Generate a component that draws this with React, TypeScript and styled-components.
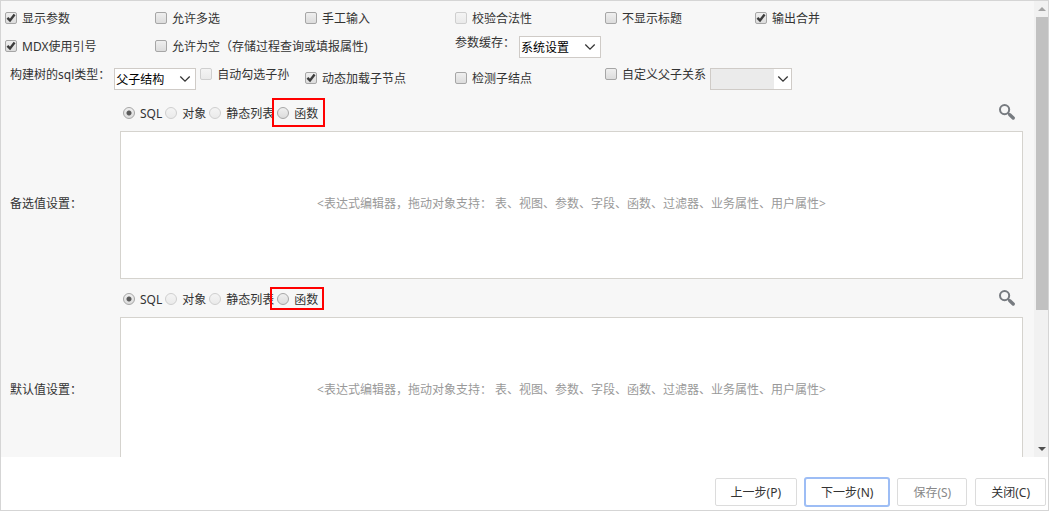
import React, { useId } from "react";
import styled, { createGlobalStyle, css } from "styled-components";

const GlobalStyle = createGlobalStyle`
  *, *::before, *::after { box-sizing: border-box; }
  body {
    margin: 0;
    background: #fff;
  }
  body, input, select, textarea, button {
    font-family: "Noto Sans", "Noto Sans CJK SC", sans-serif;
    font-size: 12px;
    line-height: 14px;
    color: #333;
  }
`;

const Dialog = styled.main`
  display: flex;
  flex-direction: column;
  height: 100vh;
  border: 1px solid #d5d5d5;
`;

const Panel = styled.div`
  flex: 1;
  min-height: 0;
  display: flex;
  background: #f7f7f7;
`;

const Content = styled.form`
  flex: 1;
  min-width: 0;
  overflow-y: auto;
  scrollbar-width: none;
  padding-top: 4px;
`;

const Options = styled.div`
  display: grid;
  grid-template-columns: repeat(6, 150px);
  grid-template-rows: 28px 28px 36px;
  align-items: center;
  padding-left: 4px;
`;

const Cell = styled.div<{ $span?: number; $inset?: boolean }>`
  grid-column: span ${(p) => p.$span ?? 1};
  display: flex;
  align-items: flex-start;
  gap: 4px;
  padding-left: ${(p) => (p.$inset ? 5 : 0)}px;
  white-space: nowrap;
`;

const CheckLabel = styled.label`
  display: inline-flex;
  align-items: center;
  gap: 5px;
  white-space: nowrap;
`;

const CheckBox = styled.span`
  display: grid;
  width: 12px;
  height: 12px;
  margin-bottom: 2px;

  > * {
    grid-area: 1 / 1;
  }

  svg {
    pointer-events: none;
    display: none;
  }

  input:checked + svg {
    display: block;
  }
`;

const controlFace = css`
  appearance: none;
  width: 12px;
  height: 12px;
  margin: 0;
  border: 1px solid #a6a6a6;
  background: linear-gradient(#efefef, #dcdcdc);

  &:disabled {
    border-color: #cfcfcf;
    background: linear-gradient(#f4f4f4, #eaeaea);
  }
`;

const CheckInput = styled.input`
  ${controlFace}
  border-radius: 2px;
`;

const RadioInput = styled.input`
  ${controlFace}
  margin-bottom: 2px;
  border-radius: 50%;

  &:checked {
    background: radial-gradient(circle, #5a5a5a 0 2px, #5a5a5a00 3px),
      linear-gradient(#efefef, #dcdcdc);
  }
`;

const SelectBox = styled.span`
  display: grid;
  width: 82px;
  height: 22px;

  > * {
    grid-area: 1 / 1;
  }
`;

const SelectInput = styled.select`
  appearance: none;
  min-width: 0;
  margin: 0;
  padding: 1px 18px 0 1px;
  border: 1px solid #cfcbc7;
  border-radius: 0;
  background: #fff;
  color: #000;

  &:disabled {
    background: #ebebeb;
    opacity: 1;
  }
`;

const SelectArrow = styled.span<{ $boxed?: boolean }>`
  justify-self: end;
  display: flex;
  align-items: center;
  justify-content: center;
  width: ${(p) => (p.$boxed ? 17 : 20)}px;
  margin: 1px;
  background: #fff;
  pointer-events: none;
`;

const Section = styled.section`
  display: grid;
  grid-template-columns: 119px 1fr;
  grid-template-rows: 34px 148px;
  padding-right: 11px;
  margin-bottom: 4px;
`;

const SectionLabel = styled.label`
  grid-area: 2 / 1;
  align-self: center;
  padding: 0 0 2px 9px;
`;

const SectionTools = styled.div`
  grid-area: 1 / 2;
  display: flex;
  align-items: center;
  gap: 3px;
  padding: 0 8px 0 3px;
`;

const RadioLabel = styled.label`
  position: relative;
  display: inline-flex;
  align-items: center;
  gap: 5px;
  white-space: nowrap;
`;

const Highlight = styled.span<{ $tall?: boolean }>`
  position: absolute;
  border: 2px solid #f00;
  pointer-events: none;
  ${(p) =>
    p.$tall
      ? css`
          inset: -9px -7px -6px -5px;
        `
      : css`
          inset: -6px -6px -3px -7px;
        `}
`;

const SearchButton = styled.button`
  display: flex;
  margin: 0 0 4px auto;
  padding: 0;
  border: 0;
  background: none;
`;

const Editor = styled.textarea`
  grid-area: 2 / 2;
  width: 100%;
  margin: 0;
  padding: 65px 8px 0;
  border: 1px solid #d5d3ce;
  border-radius: 0;
  background: #fff;
  text-align: center;
  resize: none;

  &::placeholder {
    color: #999;
    opacity: 1;
  }
`;

const ScrollTrack = styled.div`
  display: flex;
  flex-direction: column;
  width: 14px;
  padding-left: 2px;
  background: #f1f1f1;
`;

const ScrollArrow = styled.span`
  display: flex;
  align-items: center;
  justify-content: center;
  height: 16px;
`;

const ScrollLane = styled.div`
  flex: 1;
`;

const ScrollThumb = styled.div`
  height: 69%;
  background: #c1c1c1;
`;

const Footer = styled.footer`
  display: flex;
  justify-content: flex-end;
  gap: 8px;
  padding: 21px 2px 4px;
  background: #fff;
`;

const FooterButton = styled.button<{ $primary?: boolean }>`
  height: 28px;
  padding: 2px 15px 0;
  border: 1px solid ${(p) => (p.$primary ? "#9dbdf5" : "#dcdcdc")};
  border-radius: 2px;
  box-shadow: ${(p) => (p.$primary ? "0 0 0 1px #9dbdf5" : "none")};
  background: #fff;

  &:disabled {
    color: #888;
  }
`;

interface CheckProps {
  text: string;
  checked?: boolean;
  disabled?: boolean;
}

function Check({ text, checked, disabled }: CheckProps) {
  return (
    <CheckLabel>
      <CheckBox>
        <CheckInput type="checkbox" defaultChecked={checked} disabled={disabled} />
        <svg width="12" height="12" viewBox="0 0 12 12" fill="none" stroke="#3c3c3c" strokeWidth="2.4">
          <path d="M2.4 5.8 L5 8.4 L9.6 2.6" />
        </svg>
      </CheckBox>
      {text}
    </CheckLabel>
  );
}

interface SelectProps {
  id?: string;
  value?: string;
  name?: string;
  disabled?: boolean;
}

function Select({ id, value = "", name, disabled }: SelectProps) {
  return (
    <SelectBox>
      <SelectInput id={id} aria-label={name} disabled={disabled}>
        <option>{value}</option>
      </SelectInput>
      <SelectArrow $boxed={disabled}>
        <svg width="12" height="8" viewBox="0 0 12 8" fill="none" stroke="#333" strokeWidth="1.3">
          <path d="M1.3 1.5 L6 6.1 L10.7 1.5" />
        </svg>
      </SelectArrow>
    </SelectBox>
  );
}

const sources = [
  { text: "SQL", checked: true },
  { text: "对象", disabled: true },
  { text: "静态列表", disabled: true },
  { text: "函数", marked: true },
];

function ValueSection({ title, tall }: { title: string; tall?: boolean }) {
  const id = useId();
  return (
    <Section>
      <SectionTools>
        {sources.map((s) => (
          <RadioLabel key={s.text}>
            <RadioInput type="radio" name={id + "source"} defaultChecked={s.checked} disabled={s.disabled} />
            {s.text}
            {s.marked && <Highlight $tall={tall} />}
          </RadioLabel>
        ))}
        <SearchButton type="button" aria-label="搜索">
          <svg width="16" height="16" viewBox="0 0 16 16" fill="none" stroke="#777b80">
            <circle cx="5.6" cy="5.6" r="4.6" strokeWidth="2" />
            <path d="M8.8 8.8 L10.6 10.6" strokeWidth="2" />
            <path d="M10.8 10.8 L14.2 14" strokeWidth="3.4" strokeLinecap="round" />
          </svg>
        </SearchButton>
      </SectionTools>
      <SectionLabel htmlFor={id}>{title}</SectionLabel>
      <Editor
        id={id}
        placeholder="<表达式编辑器，拖动对象支持： 表、视图、参数、字段、函数、过滤器、业务属性、用户属性>"
      />
    </Section>
  );
}

export default function App() {
  return (
    <>
      <GlobalStyle />
      <Dialog>
        <Panel>
          <Content>
            <Options>
              <Check text="显示参数" checked />
              <Check text="允许多选" />
              <Check text="手工输入" />
              <Check text="校验合法性" disabled />
              <Check text="不显示标题" />
              <Check text="输出合并" checked />

              <Check text="MDX使用引号" checked />
              <Cell $span={2}>
                <Check text="允许为空（存储过程查询或填报属性)" />
              </Cell>
              <Cell $span={3}>
                <label htmlFor="cache">参数缓存：</label>
                <Select id="cache" value="系统设置" />
              </Cell>

              <Cell $span={2} $inset>
                <label htmlFor="treeType">构建树的sql类型：</label>
                <Select id="treeType" value="父子结构" />
                <Check text="自动勾选子孙" disabled />
              </Cell>
              <Check text="动态加载子节点" checked />
              <Check text="检测子结点" />
              <Cell $span={2}>
                <Check text="自定义父子关系" />
                <Select name="父子关系" disabled />
              </Cell>
            </Options>
            <ValueSection title="备选值设置：" tall />
            <ValueSection title="默认值设置：" />
          </Content>
          <ScrollTrack aria-hidden="true">
            <ScrollArrow>
              <svg width="8" height="4" viewBox="0 0 8 4" fill="#a3a3a3">
                <path d="M0 4 L4 0 L8 4 Z" />
              </svg>
            </ScrollArrow>
            <ScrollLane>
              <ScrollThumb />
            </ScrollLane>
            <ScrollArrow>
              <svg width="8" height="4" viewBox="0 0 8 4" fill="#505050">
                <path d="M0 0 L8 0 L4 4 Z" />
              </svg>
            </ScrollArrow>
          </ScrollTrack>
        </Panel>
        <Footer>
          <FooterButton type="button">上一步(P)</FooterButton>
          <FooterButton type="button" $primary>
            下一步(N)
          </FooterButton>
          <FooterButton type="button" disabled>
            保存(S)
          </FooterButton>
          <FooterButton type="button">关闭(C)</FooterButton>
        </Footer>
      </Dialog>
    </>
  );
}
